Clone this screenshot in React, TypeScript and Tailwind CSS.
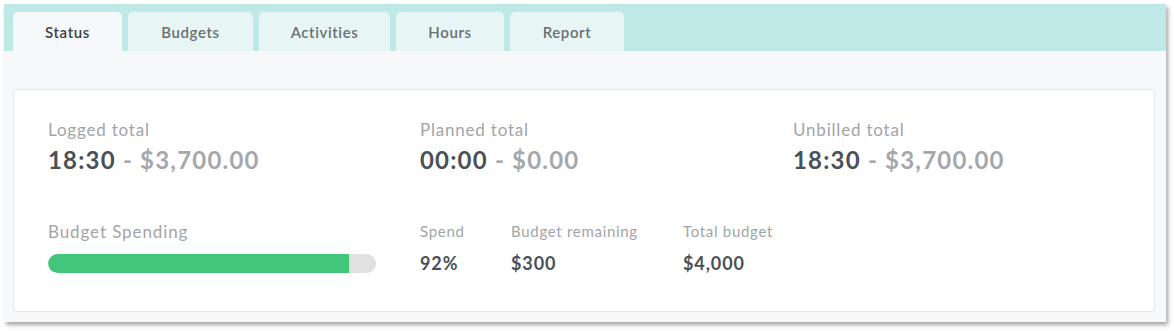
const tabs = ["Status", "Budgets", "Activities", "Hours", "Report"];
const tabWidths = ["w-[109px]", "w-[125px]", "w-[131px]", "w-[108px]", "w-[114px]"];

function Total({ label, time, amount }: { label: string; time: string; amount: string }) {
  return (
    <div>
      <div className="text-[17px] leading-[20px] tracking-[0.8px] text-[#a2a5a8]">{label}</div>
      <div className="mt-[6px] text-[24px] leading-[28px] font-bold tracking-[1.2px]">
        <span className="text-[#4a5156]">{time}</span>
        <span className="text-[#a5a8ab]"> - {amount}</span>
      </div>
    </div>
  );
}

function Stat({ label, value, width }: { label: string; value: string; width: string }) {
  return (
    <div className={width}>
      <div className="text-[15px] leading-[20px] tracking-[0.7px] text-[#a2a5a8]">{label}</div>
      <div className="mt-[12px] text-[18px] leading-[20px] font-bold tracking-[0.9px] text-[#4a5156]">{value}</div>
    </div>
  );
}

export default function App() {
  const spend = 92;
  return (
    <div className="w-[1174px] h-[331px] bg-white pt-[4px] pl-[4px]" style={{ fontFamily: "Lato, 'Open Sans', sans-serif" }}>
      <div className="w-[1162px] h-[318px] bg-[#f7f8fa] shadow-[2px_3px_4px_rgba(0,0,0,0.35)] flex flex-col">
        <div className="h-[47px] bg-[#bee9e6] flex items-end pl-[9px] gap-[6px]">
          {tabs.map((t, i) => (
            <div
              key={t}
              className={`${tabWidths[i]} h-[39px] pt-[2px] rounded-t-[5px] flex items-center justify-center text-[15px] font-semibold tracking-[0.6px] ${
                i === 0 ? "bg-[#f7f8fa] text-[#3c4246]" : "bg-[#e7f6f5] text-[#6a6f72]"
              }`}
            >
              {t}
            </div>
          ))}
        </div>
        <div className="pt-[38px] pl-[9px] pr-[11px]">
          <div className="h-[223px] bg-white border border-[#e4e6e8] rounded-[3px] pl-[34px] pt-[30px]">
            <div className="grid grid-cols-[372px_373px_1fr]">
              <Total label="Logged total" time="18:30" amount="$3,700.00" />
              <Total label="Planned total" time="00:00" amount="$0.00" />
              <Total label="Unbilled total" time="18:30" amount="$3,700.00" />
            </div>
            <div className="mt-[48px] grid grid-cols-[372px_1fr]">
              <div>
                <div className="text-[17px] leading-[20px] tracking-[0.9px] text-[#a2a5a8]">Budget Spending</div>
                <div className="mt-[12px] w-[328px] h-[19px] rounded-full bg-[#e1e1e1] overflow-hidden">
                  <div className="h-full bg-[#42c67a] rounded-l-full" style={{ width: `${(spend / 100) * 328 - 0.5}px` }} />
                </div>
              </div>
              <div className="flex -mt-[1px]">
                <Stat label="Spend" value="92%" width="w-[91px]" />
                <Stat label="Budget remaining" value="$300" width="w-[172px]" />
                <Stat label="Total budget" value="$4,000" width="w-[120px]" />
              </div>
            </div>
          </div>
        </div>
      </div>
    </div>
  );
}
